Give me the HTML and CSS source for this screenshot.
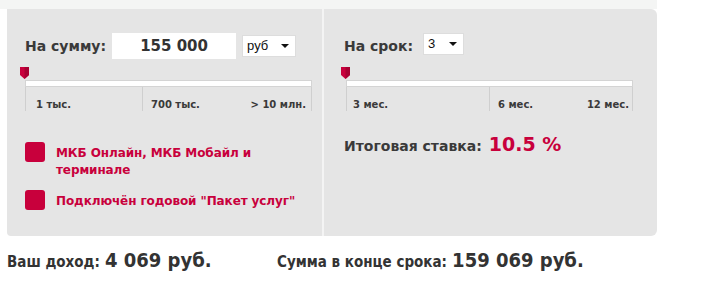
FILE: index.html
```html
<!DOCTYPE html>
<html lang="ru">
<head>
  <meta charset="UTF-8" />
  <title>Калькулятор вклада</title>
  <link rel="stylesheet" href="styles.css">
</head>
<body>
  <div class="top-strip"></div>
  <div class="calc">
    <div class="col col-sum">
      <div class="field-row">
        <span class="field-label">На сумму:</span>
        <div class="amount">155 000</div>
        <div class="select select-cur">руб<span class="arrow"></span></div>
      </div>
      <div class="slider">
        <svg class="pin" width="9" height="12" viewBox="0 0 9 12"><path d="M0 0H9V8L4.5 12L0 8Z" fill="#c8003c"/><path d="M4.5 0H9V8L4.5 12Z" fill="#a80032"/></svg>
        <div class="track"></div>
        <div class="scale scale-sum">
          <div class="seg"><span>1 тыс.</span></div>
          <div class="seg seg-last"><span>700 тыс.</span><span>&gt; 10 млн.</span></div>
        </div>
      </div>
      <div class="options">
        <div class="option">
          <span class="check"></span>
          <span class="option-text">МКБ Онлайн, МКБ Мобайл и терминале</span>
        </div>
        <div class="option">
          <span class="check"></span>
          <span class="option-text">Подключён годовой "Пакет услуг"</span>
        </div>
      </div>
    </div>
    <div class="col col-term">
      <div class="field-row">
        <span class="field-label">На срок:</span>
        <div class="select select-term">3<span class="arrow"></span></div>
      </div>
      <div class="slider">
        <svg class="pin" width="9" height="12" viewBox="0 0 9 12"><path d="M0 0H9V8L4.5 12L0 8Z" fill="#c8003c"/><path d="M4.5 0H9V8L4.5 12Z" fill="#a80032"/></svg>
        <div class="track"></div>
        <div class="scale scale-term">
          <div class="seg"><span>3 мес.</span></div>
          <div class="seg seg-last"><span>6 мес.</span><span>12 мес.</span></div>
        </div>
      </div>
      <div class="rate">
        <span class="rate-label">Итоговая ставка:</span>
        <span class="rate-value">10.5 %</span>
      </div>
    </div>
  </div>
  <div class="totals">
    <div class="total total-income"><span class="total-label">Ваш доход:</span> <span class="total-value">4 069 руб.</span></div>
    <div class="total"><span class="total-label">Сумма в конце срока:</span> <span class="total-value">159 069 руб.</span></div>
  </div>
</body>
</html>
```

FILE: styles.css
```css
body {
  margin: 0;
  font-family: "DejaVu Sans", Verdana, sans-serif;
  background: #fff;
  color: #333;
  width: 703px;
  height: 286px;
  overflow: hidden;
}
.top-strip {
  width: 657px;
  height: 9px;
  background: #f4f5f4;
}
.calc {
  display: flex;
  margin-left: 7px;
  width: 650px;
  height: 227px;
  background: #e5e5e5;
  border-radius: 0 6px 6px 4px;
}
.col {
  box-sizing: border-box;
  padding-top: 24px;
}
.col-sum {
  width: 317px;
  padding-left: 18px;
  border-right: 2px solid #f4f4f4;
}
.col-term {
  flex: 1;
  padding-left: 22px;
}
.field-row {
  display: flex;
  align-items: center;
  height: 26px;
}
.field-label {
  font-size: 14px;
  font-weight: bold;
  color: #3a3a3a;
}
.col-term .field-label {
  margin-left: -2px;
}
.amount {
  width: 124px;
  height: 26px;
  margin-left: 6px;
  background: #fff;
  font-size: 15px;
  font-weight: bold;
  line-height: 26px;
  text-align: center;
  color: #333;
}
.select {
  position: relative;
  box-sizing: border-box;
  height: 22px;
  background: #fff;
  border: 1px solid #ddd;
  font-family: "Liberation Sans", Arial, sans-serif;
  font-size: 13px;
  line-height: 20px;
  padding-left: 4px;
  color: #111;
}
.select-cur {
  width: 54px;
  margin-left: 6px;
}
.select-term {
  width: 41px;
  margin-left: 10px;
  margin-top: -4px;
}
.arrow {
  position: absolute;
  right: 6px;
  top: 8px;
  border-left: 4px solid transparent;
  border-right: 4px solid transparent;
  border-top: 4px solid #111;
}
.slider {
  margin-top: 8px;
}
.pin {
  display: block;
  margin-left: -5px;
}
.track {
  box-sizing: border-box;
  width: 287px;
  height: 7px;
  margin-top: 1px;
  background: #fff;
  border: 1px solid #d4d4d4;
}
.scale {
  display: flex;
  width: 287px;
  height: 24px;
}
.seg {
  box-sizing: border-box;
  display: flex;
  align-items: flex-end;
  border-left: 1px solid #cfcfcf;
  font-size: 10px;
  font-weight: bold;
  color: #3a3a3a;
  padding-bottom: 1px;
}
.seg-last {
  flex: 1;
  justify-content: space-between;
  border-right: 1px solid #cfcfcf;
  padding-right: 5px;
}
.scale-sum .seg:first-child {
  width: 117px;
  padding-left: 10px;
}
.scale-sum .seg-last {
  padding-left: 8px;
}
.scale-term .seg:first-child {
  width: 143px;
  padding-left: 6px;
}
.scale-term .seg-last {
  padding-left: 8px;
  padding-right: 3px;
}
.options {
  display: flex;
  flex-direction: column;
  gap: 11px;
  margin-top: 31px;
}
.option {
  display: flex;
  align-items: flex-start;
  gap: 11px;
}
.check {
  flex: none;
  width: 20px;
  height: 20px;
  border-radius: 3px;
  background: #c8003c;
}
.option-text {
  width: 240px;
  font-size: 12px;
  font-weight: bold;
  line-height: 17px;
  color: #c8003c;
  margin-top: 3px;
  letter-spacing: -0.1px;
}
.option:last-child .option-text {
  white-space: nowrap;
}
.rate {
  display: flex;
  align-items: baseline;
  gap: 7px;
  margin-top: 22px;
  margin-left: -2px;
}
.rate-label {
  font-size: 14px;
  font-weight: bold;
  color: #3a3a3a;
}
.rate-value {
  font-size: 19px;
  font-weight: bold;
  color: #c8003c;
}
.totals {
  display: flex;
  margin: 12px 0 0 7px;
  color: #333;
}
.total-income {
  width: 270px;
}
.total-label {
  font-family: "DejaVu Sans Condensed", "Liberation Sans", Arial, sans-serif;
  font-stretch: condensed;
  font-size: 15px;
  font-weight: bold;
}
.total-value {
  font-family: "DejaVu Sans Condensed", "Liberation Sans", Arial, sans-serif;
  font-stretch: condensed;
  font-size: 20px;
  font-weight: bold;
}
```
